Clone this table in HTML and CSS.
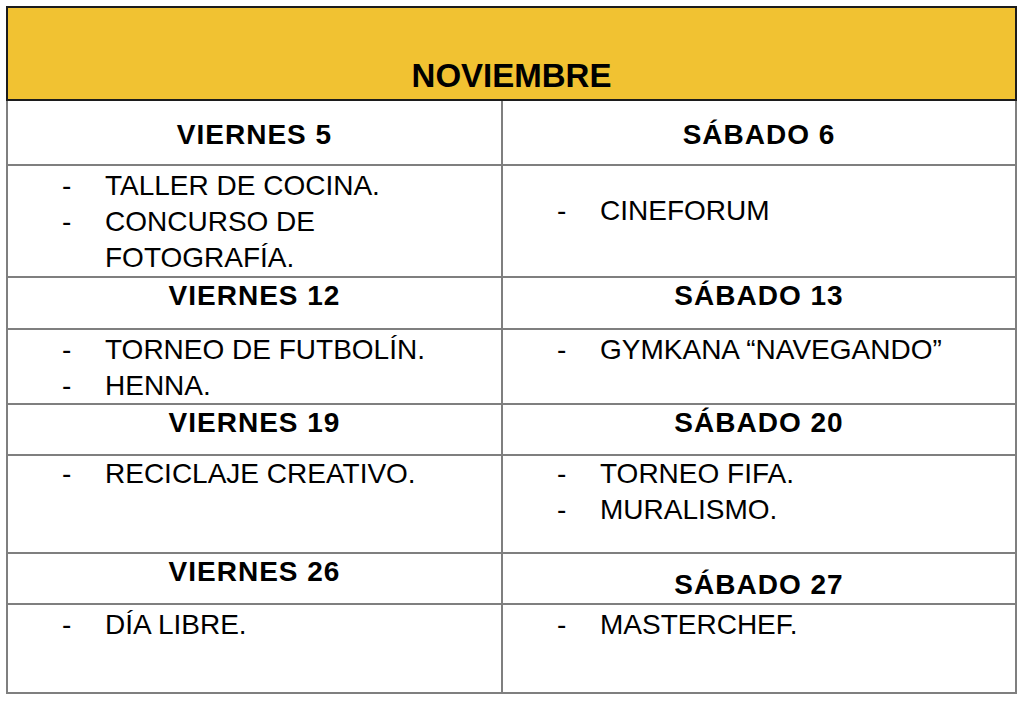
FILE: index.html
```html
<!DOCTYPE html>
<html lang="es">
<head>
<meta charset="utf-8">
<title>Noviembre</title>
<link rel="stylesheet" href="styles.css">
</head>
<body>
<div class="sheet">
  <div class="month">NOVIEMBRE</div>
  <div class="grid">
    <div class="cell day day-first">VIERNES 5</div>
    <div class="cell day day-first">SÁBADO 6</div>

    <div class="cell acts acts-tight">
      <ul class="list">
        <li>TALLER DE COCINA.</li>
        <li>CONCURSO DE FOTOGRAFÍA.</li>
      </ul>
    </div>
    <div class="cell acts acts-mid">
      <ul class="list">
        <li>CINEFORUM</li>
      </ul>
    </div>

    <div class="cell day">VIERNES 12</div>
    <div class="cell day">SÁBADO 13</div>

    <div class="cell acts acts-tight">
      <ul class="list">
        <li>TORNEO DE FUTBOLÍN.</li>
        <li>HENNA.</li>
      </ul>
    </div>
    <div class="cell acts acts-tight">
      <ul class="list">
        <li>GYMKANA “NAVEGANDO”</li>
      </ul>
    </div>

    <div class="cell day">VIERNES 19</div>
    <div class="cell day">SÁBADO 20</div>

    <div class="cell acts">
      <ul class="list">
        <li>RECICLAJE CREATIVO.</li>
      </ul>
    </div>
    <div class="cell acts">
      <ul class="list">
        <li>TORNEO FIFA.</li>
        <li>MURALISMO.</li>
      </ul>
    </div>

    <div class="cell day">VIERNES 26</div>
    <div class="cell day day-low">SÁBADO 27</div>

    <div class="cell acts acts-tight">
      <ul class="list">
        <li>DÍA LIBRE.</li>
      </ul>
    </div>
    <div class="cell acts acts-tight">
      <ul class="list">
        <li>MASTERCHEF.</li>
      </ul>
    </div>
  </div>
</div>
</body>
</html>
```

FILE: styles.css
```css
html, body {
  margin: 0;
  padding: 0;
  background: #ffffff;
}

body {
  font-family: "Liberation Sans", Arial, sans-serif;
  color: #000000;
}

.sheet {
  padding: 6px 0 0 6px;
  width: 1011px;
}

.month {
  box-sizing: border-box;
  height: 95px;
  border: 2px solid #1c1c1c;
  background: #f1c232;
  display: flex;
  align-items: flex-end;
  justify-content: center;
  padding-bottom: 3px;
  font-weight: 700;
  font-size: 33px;
  line-height: 40px;
}

.grid {
  display: grid;
  grid-template-columns: 493px 512px;
  grid-template-rows: 63px 110px 50px 73px 49px 96px 49px 87px;
  gap: 2px;
  background: #7f7f7f;
  border: 2px solid #7f7f7f;
  border-top: 0;
}

.cell {
  background: #ffffff;
  box-sizing: border-box;
}

.day {
  text-align: center;
  font-weight: 700;
  font-size: 28px;
  line-height: 36px;
  letter-spacing: 1px;
  padding-top: 0;
}

.day-first {
  padding-top: 16px;
}

.day-low {
  padding-top: 13px;
}

.acts {
  padding-top: 0;
}

.acts-tight {
  padding-top: 2px;
}

.acts-mid {
  padding-top: 27px;
}

.list {
  list-style: none;
  margin: 0;
  padding: 0 20px 0 54px;
  font-size: 28px;
  line-height: 36px;
}

.list li {
  display: flex;
}

.list li::before {
  content: "-";
  flex: 0 0 43px;
}
```
